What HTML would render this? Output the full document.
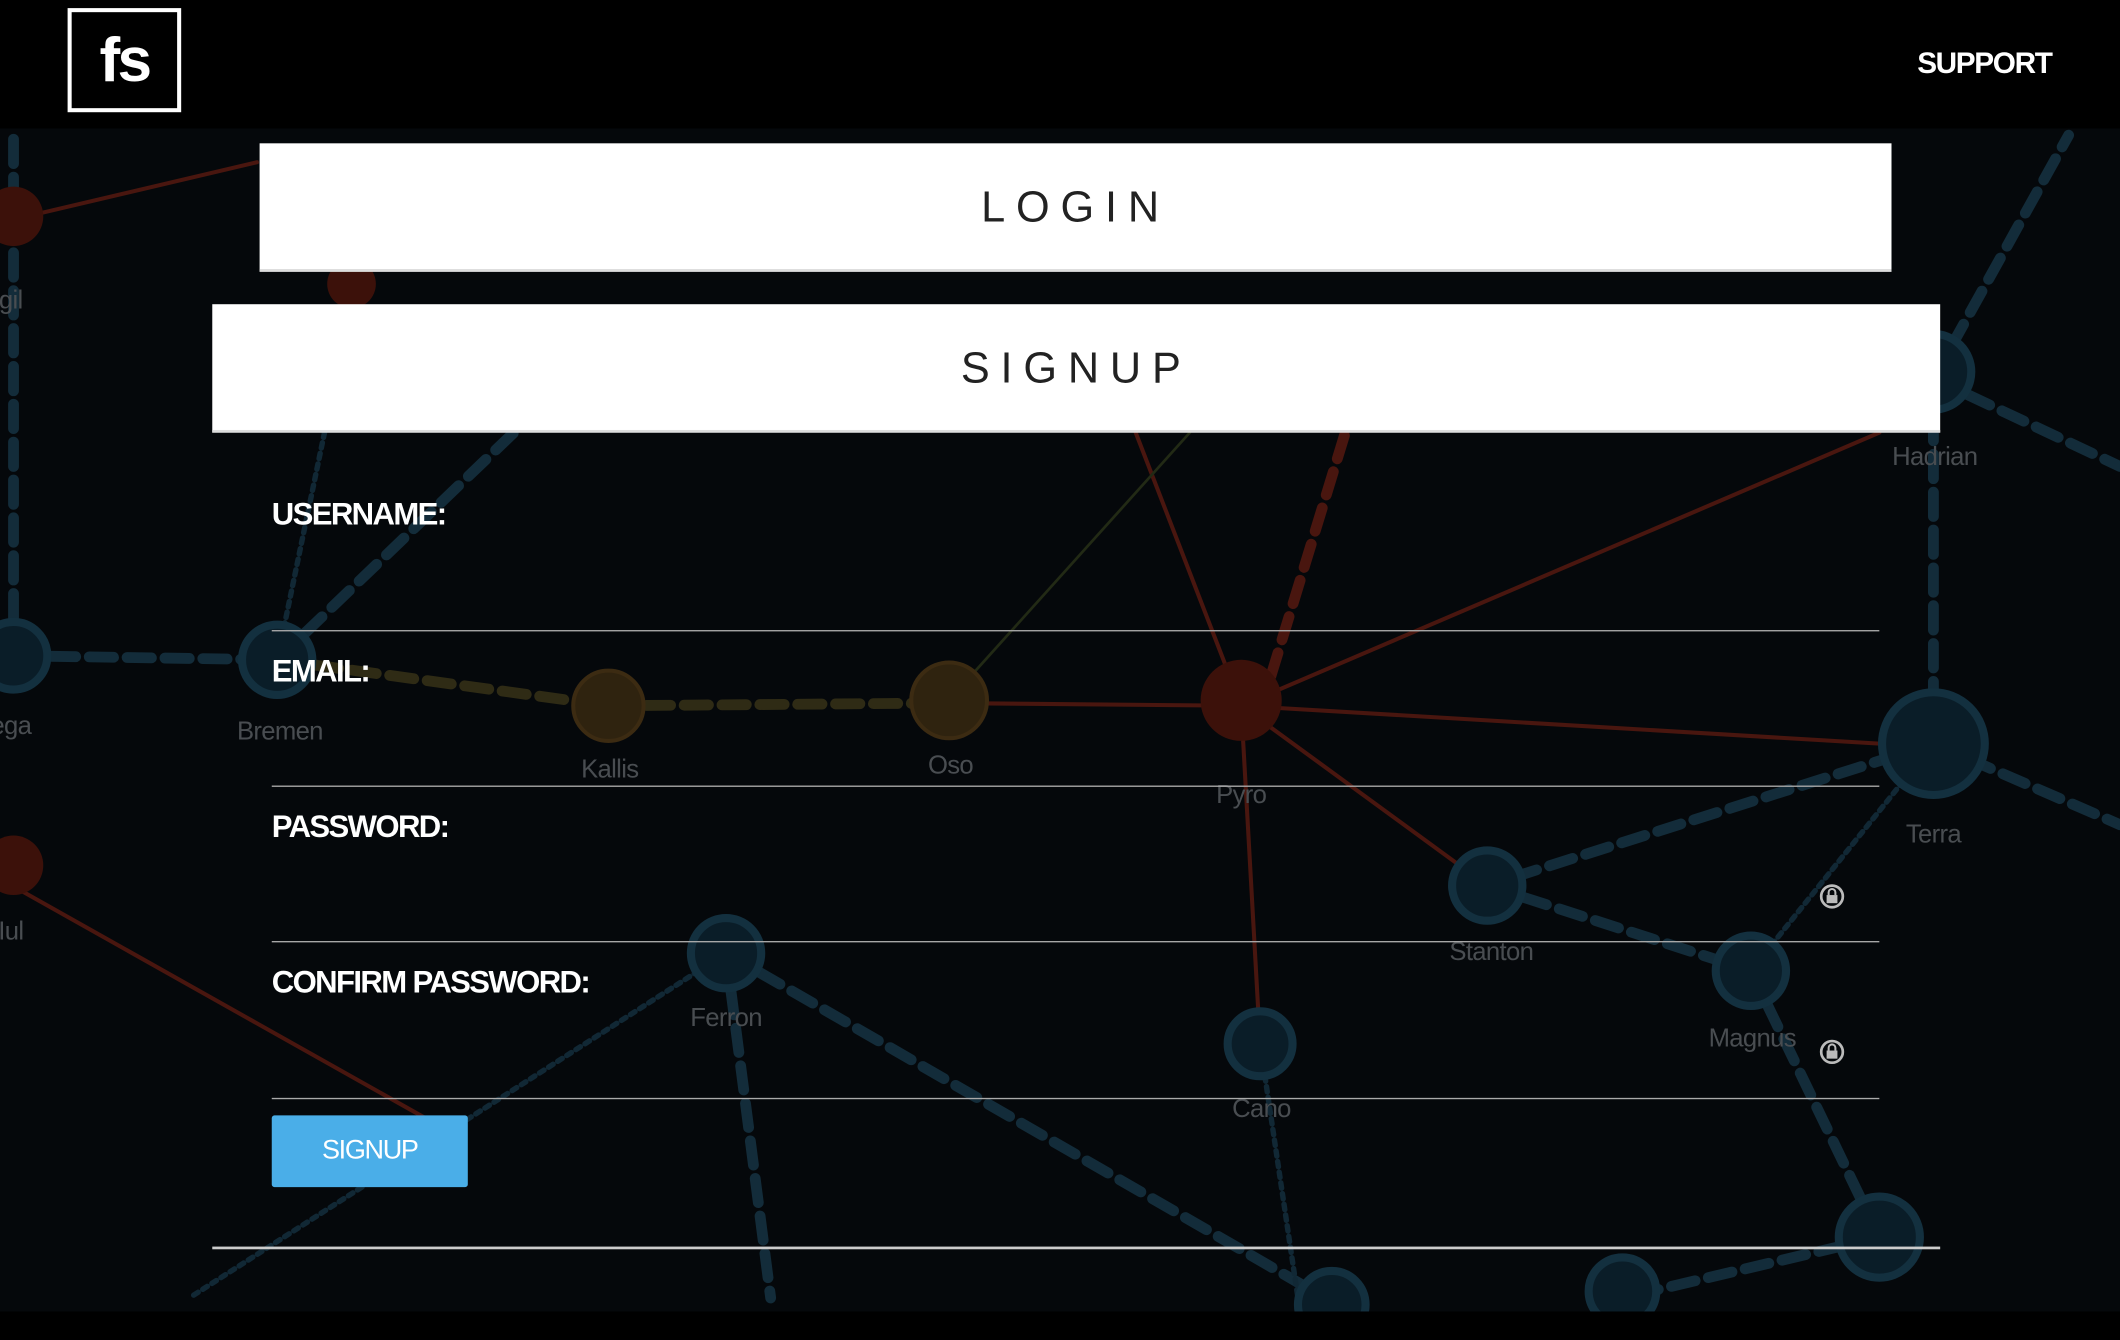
<!DOCTYPE html>
<html><head><meta charset="utf-8"><style>
html,body{margin:0;padding:0;background:#000;width:2120px;height:1340px;overflow:hidden}
#w{position:absolute;left:0;top:0;width:1568px;height:991px;transform:scale(1.35204);transform-origin:0 0;font-family:"Liberation Sans",sans-serif;background:#05080b}
.abs{position:absolute}
.box{background:#fff;color:#222;text-align:center;font-size:32px;letter-spacing:8px;border-bottom:2px solid #ddd;box-sizing:border-box}
.lbl{position:absolute;left:201px;color:#fff;font-weight:bold;font-size:23px;letter-spacing:-1.2px}
.ln{position:absolute;left:201px;width:1189px;height:1px;background:#aaa}
</style></head><body><div id="w">
<svg class="abs" style="left:0;top:95px;opacity:0.8" width="1568" height="876" viewBox="0 95 1568 876">
<rect x="0" y="95" width="1568" height="876" fill="#06090c"/>
<g fill="none" stroke-linecap="round">
<g stroke="#173646" stroke-width="8" stroke-dasharray="18 10">
<line x1="10" y1="485" x2="205" y2="488"/>
<line x1="205" y1="488" x2="380" y2="320"/>
<line x1="1430" y1="550" x2="1100" y2="655"/>
<line x1="1100" y1="655" x2="1295" y2="718"/>
<line x1="1430" y1="550" x2="1430" y2="280"/>
<line x1="1430" y1="280" x2="1530" y2="100"/>
<line x1="1430" y1="280" x2="1568" y2="345"/>
<line x1="1430" y1="550" x2="1568" y2="610"/>
<line x1="537" y1="705" x2="980" y2="960"/>
<line x1="537" y1="705" x2="570" y2="960"/>
<line x1="1295" y1="718" x2="1390" y2="915"/>
<line x1="1390" y1="915" x2="1200" y2="960"/>
<line x1="10" y1="485" x2="10" y2="100"/>
</g>
<g stroke="#153040" stroke-width="4" stroke-dasharray="4 4">
<line x1="537" y1="705" x2="140" y2="960"/>
<line x1="932" y1="772" x2="960" y2="960"/>
<line x1="1295" y1="718" x2="1430" y2="550"/>
<line x1="205" y1="488" x2="240" y2="320"/>
</g>
<g stroke="#3a3418" stroke-width="8" stroke-dasharray="18 10">
<line x1="205" y1="488" x2="450" y2="522"/>
<line x1="450" y1="522" x2="700" y2="520"/>
</g>
<g stroke="#5a1a10" stroke-width="3">
<line x1="700" y1="520" x2="918" y2="522"/>
<line x1="918" y1="522" x2="840" y2="320"/>
<line x1="918" y1="522" x2="1390" y2="320"/>
<line x1="918" y1="522" x2="1390" y2="550"/>
<line x1="918" y1="522" x2="1100" y2="655"/>
<line x1="918" y1="522" x2="932" y2="772"/>
<line x1="0" y1="650" x2="320" y2="830"/>
<line x1="20" y1="160" x2="190" y2="120"/>
</g>
<g stroke="#5a1a10" stroke-width="8" stroke-dasharray="18 10"><line x1="940" y1="500" x2="995" y2="320"/></g>
<line x1="700" y1="520" x2="880" y2="320" stroke="#2a3318" stroke-width="2"/>
</g>
<g fill="#0c2330" stroke="#173a4c" stroke-width="6">
<circle cx="10" cy="485" r="25"/><circle cx="205" cy="488" r="26"/>
<circle cx="1430" cy="550" r="38"/><circle cx="1430" cy="275" r="28"/>
<circle cx="1100" cy="655" r="26"/><circle cx="1295" cy="718" r="26"/>
<circle cx="537" cy="705" r="26"/><circle cx="932" cy="772" r="24"/>
<circle cx="1390" cy="915" r="30"/><circle cx="1200" cy="955" r="25"/><circle cx="985" cy="965" r="25"/>
</g>
<g fill="#3a2a10" stroke="#4a3414" stroke-width="3"><circle cx="450" cy="522" r="26"/><circle cx="702" cy="518" r="28"/></g>
<g fill="#4a140a"><circle cx="918" cy="518" r="30"/><circle cx="10" cy="640" r="22"/><circle cx="260" cy="210" r="18"/><circle cx="10" cy="160" r="22"/></g>
<g fill="#5a5f63" font-family="Liberation Sans,sans-serif" font-size="19" text-anchor="middle" letter-spacing="-0.5">
<text x="207" y="547">Bremen</text><text x="451" y="575">Kallis</text><text x="703" y="572">Oso</text>
<text x="918" y="594">Pyro</text><text x="1430" y="623">Terra</text><text x="1431" y="344">Hadrian</text>
<text x="1103" y="710">Stanton</text><text x="1296" y="774">Magnus</text><text x="537" y="759">Ferron</text>
<text x="933" y="826">Cano</text><text x="5" y="228">rgil</text><text x="8" y="543">ega</text><text x="8" y="695">Iul</text>
</g>
</svg>
<div class="abs" style="left:0;top:0;width:1568px;height:95px;background:#000"></div>
<div class="abs" style="left:0;top:970px;width:1568px;height:21px;background:#000"></div>
<div class="abs" style="left:50px;top:6px;width:78px;height:71px;border:3px solid #fff;color:#fff;font-size:46px;font-weight:bold;text-align:center;line-height:70px;letter-spacing:-2px">fs</div>
<div class="abs" style="left:1418px;top:34px;color:#fff;font-weight:bold;font-size:22px;letter-spacing:-1px">SUPPORT</div>
<div class="abs box" style="left:192px;top:106px;width:1207px;height:95px;line-height:95px">LOGIN</div>
<div class="abs box" style="left:157px;top:225px;width:1278px;height:95px;line-height:95px">SIGNUP</div>
<div class="lbl" style="top:367px">USERNAME:</div>
<div class="ln" style="top:466px"></div>
<div class="lbl" style="top:483px">EMAIL:</div>
<div class="ln" style="top:581px"></div>
<div class="lbl" style="top:598px">PASSWORD:</div>
<div class="ln" style="top:696px"></div>
<div class="lbl" style="top:713px">CONFIRM PASSWORD:</div>
<div class="ln" style="top:812px"></div>
<svg class="abs" style="left:1345px;top:653px" width="20" height="22"><circle cx="10" cy="10" r="8" fill="none" stroke="#bbb" stroke-width="2"/><rect x="6" y="9" width="8" height="6" fill="#bbb"/><path d="M7.5 9V7a2.5 2.5 0 0 1 5 0v2" fill="none" stroke="#bbb" stroke-width="1.5"/></svg>
<svg class="abs" style="left:1345px;top:768px" width="20" height="22"><circle cx="10" cy="10" r="8" fill="none" stroke="#bbb" stroke-width="2"/><rect x="6" y="9" width="8" height="6" fill="#bbb"/><path d="M7.5 9V7a2.5 2.5 0 0 1 5 0v2" fill="none" stroke="#bbb" stroke-width="1.5"/></svg>
<div class="abs" style="left:201px;top:825px;width:145px;height:53px;background:#4aaee8;border-radius:2px;color:#fff;font-size:20px;text-align:center;line-height:53px;letter-spacing:-1px">SIGNUP</div>
<div class="abs" style="left:157px;top:922px;width:1278px;height:2px;background:#ccc"></div>
</div></body></html>
